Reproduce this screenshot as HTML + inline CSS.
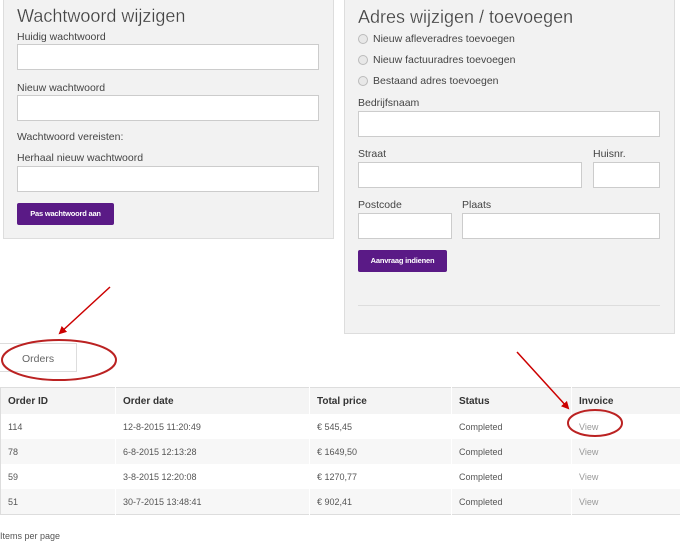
<!DOCTYPE html>
<html><head><style>
body{margin:0;width:699px;height:537px;background:#fff;font-family:"Liberation Sans",Arial,sans-serif;position:relative;overflow:hidden;color:#333}
.a{position:absolute}
.panel{background:#f2f2f2;border:1px solid #ddd;box-sizing:border-box}
.inp{position:absolute;background:#fff;border:1px solid #ccc;box-sizing:border-box}
.lbl{position:absolute;font-size:10.5px;color:#444;white-space:nowrap}
.h{position:absolute;font-size:18px;color:#444;white-space:nowrap;-webkit-text-stroke:0.2px #fff}
.btn{position:absolute;background:#5a1a86;color:#fff;font-size:7.5px;font-weight:bold;text-align:center;border-radius:2px;letter-spacing:-0.2px}
.rad{position:absolute;width:8px;height:8px;border:1px solid #bbb;border-radius:50%;background:#e8e8e8}
table{position:absolute;left:0;top:387px;width:680px;border-collapse:collapse;table-layout:fixed;font-size:9px;color:#555;border:1px solid #ddd}
td,th{height:25px;padding:0 0 0 7px;text-align:left;border-right:1px solid #fff;white-space:nowrap}
th{font-weight:bold;color:#333;background:#f4f4f4;height:26px;font-size:10px}
tr:nth-child(odd) td{background:#f7f7f7}
.v{color:#999}
</style></head><body>
<div class="a panel" style="left:3px;top:-2px;width:331px;height:241px"></div>
<div class="h" style="left:17px;top:6px">Wachtwoord wijzigen</div>
<div class="lbl" style="left:17px;top:31px">Huidig wachtwoord</div>
<div class="inp" style="left:17px;top:44px;width:302px;height:26px"></div>
<div class="lbl" style="left:17px;top:82px">Nieuw wachtwoord</div>
<div class="inp" style="left:17px;top:95px;width:302px;height:26px"></div>
<div class="lbl" style="left:17px;top:131px">Wachtwoord vereisten:</div>
<div class="lbl" style="left:17px;top:152px">Herhaal nieuw wachtwoord</div>
<div class="inp" style="left:17px;top:166px;width:302px;height:26px"></div>
<div class="btn" style="left:17px;top:203px;width:97px;height:22px;line-height:22px">Pas wachtwoord aan</div>

<div class="a panel" style="left:344px;top:-2px;width:331px;height:336px"></div>
<div class="h" style="left:358px;top:7px">Adres wijzigen / toevoegen</div>
<div class="rad" style="left:358px;top:34px"></div><div class="lbl" style="left:373px;top:33px">Nieuw afleveradres toevoegen</div>
<div class="rad" style="left:358px;top:55px"></div><div class="lbl" style="left:373px;top:54px">Nieuw factuuradres toevoegen</div>
<div class="rad" style="left:358px;top:76px"></div><div class="lbl" style="left:373px;top:75px">Bestaand adres toevoegen</div>
<div class="lbl" style="left:358px;top:97px">Bedrijfsnaam</div>
<div class="inp" style="left:358px;top:111px;width:302px;height:26px"></div>
<div class="lbl" style="left:358px;top:148px">Straat</div>
<div class="lbl" style="left:593px;top:148px">Huisnr.</div>
<div class="inp" style="left:358px;top:162px;width:224px;height:26px"></div>
<div class="inp" style="left:593px;top:162px;width:67px;height:26px"></div>
<div class="lbl" style="left:358px;top:199px">Postcode</div>
<div class="lbl" style="left:462px;top:199px">Plaats</div>
<div class="inp" style="left:358px;top:213px;width:94px;height:26px"></div>
<div class="inp" style="left:462px;top:213px;width:198px;height:26px"></div>
<div class="btn" style="left:358px;top:250px;width:89px;height:22px;line-height:22px">Aanvraag indienen</div>
<div class="a" style="left:358px;top:305px;width:302px;height:1px;background:#ddd"></div>

<div class="a" style="left:-1px;top:343px;width:78px;height:29px;border:1px solid #ddd;box-sizing:border-box"></div>
<div class="lbl" style="left:22px;top:353px;color:#666">Orders</div>

<table>
<colgroup><col style="width:115px"><col style="width:194px"><col style="width:142px"><col style="width:120px"><col style="width:109px"></colgroup>
<tr><th>Order ID</th><th>Order date</th><th>Total price</th><th>Status</th><th>Invoice</th></tr>
<tr><td>114</td><td>12-8-2015 11:20:49</td><td>€ 545,45</td><td>Completed</td><td class="v">View</td></tr>
<tr><td>78</td><td>6-8-2015 12:13:28</td><td>€ 1649,50</td><td>Completed</td><td class="v">View</td></tr>
<tr><td>59</td><td>3-8-2015 12:20:08</td><td>€ 1270,77</td><td>Completed</td><td class="v">View</td></tr>
<tr><td>51</td><td>30-7-2015 13:48:41</td><td>€ 902,41</td><td>Completed</td><td class="v">View</td></tr>
</table>
<div class="lbl" style="left:0;top:531px;font-size:9px;color:#555">Items per page</div>

<svg class="a" style="left:0;top:0" width="699" height="537">
<defs><marker id="m" markerWidth="8" markerHeight="8" refX="6" refY="4" orient="auto" markerUnits="userSpaceOnUse"><path d="M0,0 L8,4 L0,8z" fill="#c00"/></marker></defs>
<line x1="110" y1="287" x2="60" y2="333" stroke="#c00" stroke-width="1.5" marker-end="url(#m)"/>
<ellipse cx="59" cy="360" rx="57" ry="20" fill="none" stroke="#b22" stroke-width="2"/>
<line x1="517" y1="352" x2="568" y2="408" stroke="#c00" stroke-width="1.5" marker-end="url(#m)"/>
<ellipse cx="595" cy="423" rx="27" ry="13" fill="none" stroke="#b22" stroke-width="2"/>
</svg>
</body></html>
